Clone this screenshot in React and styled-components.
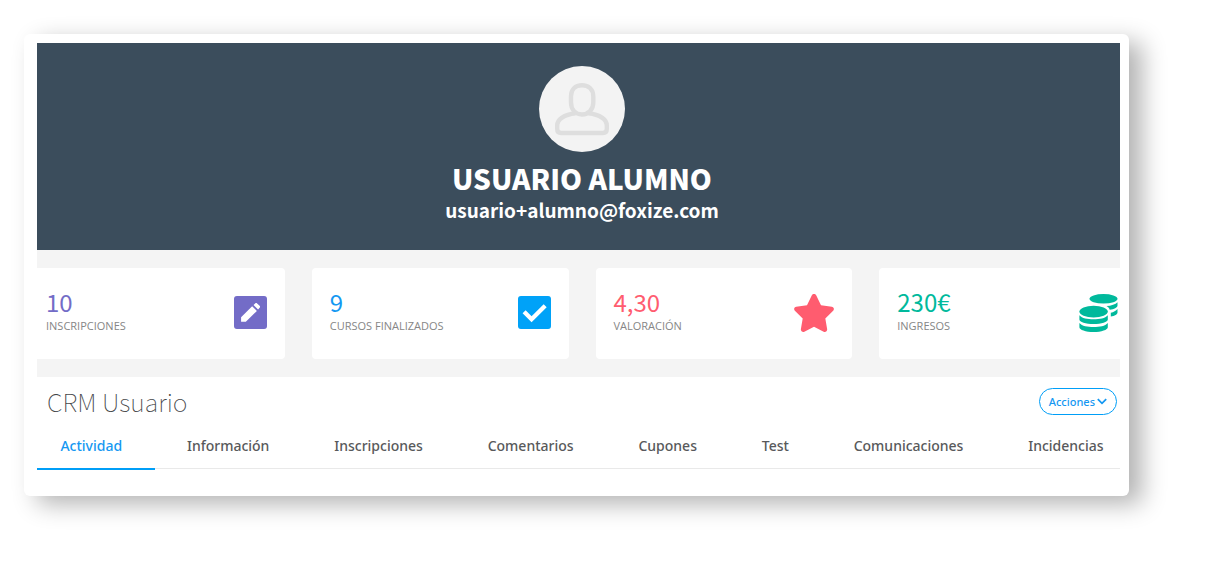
import React from 'react'
import styled, { createGlobalStyle } from 'styled-components'
import { FaStar } from 'react-icons/fa6'

const GlobalStyle = createGlobalStyle`
  * {
    box-sizing: border-box;
  }

  body {
    margin: 0;
    background: #fff;
    font-family: 'Noto Sans', 'Open Sans', sans-serif;
  }
`

const displayFont = "'Noto Sans CJK SC', 'Noto Sans', sans-serif"

const Page = styled.div`
  padding: 34px 84px 70px 24px;
`

const Sheet = styled.main`
  padding: 9px 9px 26px 13px;
  border-radius: 6px;
  background: #fff;
  box-shadow: 13px 8px 25px rgba(0, 0, 0, 0.3);
`

const Viewport = styled.div`
  overflow: hidden;
`

const Content = styled.div`
  margin: 0 -16px 0 -9px;
  padding-bottom: 1px;
`

const Header = styled.header`
  display: flex;
  flex-direction: column;
  align-items: center;
  padding: 23px 0 26px;
  background: #3b4d5c;
  color: #fff;
  font-family: ${displayFont};
`

const Avatar = styled.svg`
  width: 86px;
  height: 86px;
`

const Name = styled.h1`
  margin: 8px 0 0;
  font-size: 28px;
  font-weight: 900;
  line-height: 36px;
  text-transform: uppercase;
`

const Email = styled.div`
  font-size: 19px;
  font-weight: 700;
  line-height: 28px;
`

const Stats = styled.section`
  display: grid;
  grid-template-columns: repeat(4, 1fr);
  gap: 27px;
  padding: 18px 0;
  background: #f4f4f4;
`

const Stat = styled.div`
  display: flex;
  align-items: center;
  justify-content: space-between;
  height: 91px;
  padding: 0 18px 2px;
  border-radius: 4px;
  background: #fff;
  color: ${(props) => props.$color};
`

const StatText = styled.div`
  padding-bottom: 6px;
`

const Value = styled.div`
  font-family: ${displayFont};
  font-size: 24px;
  line-height: 32px;
`

const Label = styled.div`
  color: #868686;
  font-family: 'Open Sans', sans-serif;
  font-size: 11px;
  font-weight: 500;
  line-height: 16px;
  text-transform: uppercase;
`

const IconSlot = styled.div`
  display: flex;

  & > svg {
    display: block;
  }
`

const TitleBar = styled.div`
  display: flex;
  align-items: center;
  justify-content: space-between;
  height: 50px;
  padding: 0 19px 2px;
`

const Title = styled.h2`
  margin: 0;
  color: #454648;
  font-family: ${displayFont};
  font-size: 25px;
  font-weight: 100;
  line-height: 36px;
`

const Actions = styled.button`
  display: flex;
  align-items: center;
  gap: 2px;
  height: 27px;
  padding: 0 9px;
  border: 1px solid #009ef7;
  border-radius: 14px;
  background: #fff;
  color: #1598f2;
  font: 500 11px 'Noto Sans', sans-serif;
`

const Tabs = styled.nav`
  display: flex;
  height: 42px;
  border-bottom: 1px solid #e9e9e9;
`

const Tab = styled.a`
  flex: 1 1 auto;
  height: 43px;
  padding-top: 9px;
  border-bottom: 2px solid ${(props) => (props.$active ? '#009ef7' : 'transparent')};
  color: ${(props) => (props.$active ? '#1598f2' : '#58595b')};
  font-size: 14px;
  font-weight: 500;
  line-height: 20px;
  text-align: center;
  text-decoration: none;
`

const PencilIcon = () => (
  <svg width="33" height="33" viewBox="0 0 34 34">
    <rect width="34" height="34" rx="3" fill="#736cc7" />
    <path
      d="M7.3 26.5v-4.7L18.7 10.6l4.9 4.8L12.2 26.5zM20.1 9.3l1.7-1.7c.6-.6 1.4-.6 2 0l2.6 2.5c.6.6.6 1.4 0 2l-1.6 1.9z"
      fill="#fff"
    />
  </svg>
)

const CheckIcon = () => (
  <svg width="33" height="33" viewBox="0 0 34 34" fill="none">
    <rect width="34" height="34" rx="3" fill="#00a2f8" />
    <path d="M6.3 16.2 14 24 28 10" stroke="#fff" strokeWidth="4.4" />
  </svg>
)

const CoinsIcon = () => (
  <svg width="39" height="38" viewBox="0 0 39 38" fill="currentColor">
    <ellipse cx="24.5" cy="4.8" rx="14" ry="4.8" />
    <path d="M38.5 8.3v3.2c0 2.1-3.4 3.7-7.8 4.2-.5-1.6-1.6-2.8-3.2-3.6 4.8-.3 9.1-1.6 11-3.8z" />
    <path d="M38.5 15v3.6c0 1.9-2.7 3.4-6.7 4v-3.9c2.8-.6 5.2-1.7 6.7-3.7z" />
    <ellipse cx="14.6" cy="17.6" rx="14.2" ry="5.8" />
    <path d="M.4 21.2c2.7 3.1 8 4 14.2 4s11.5-.9 14.2-4v4.3c0 2.5-6.3 4.5-14.2 4.5S.4 28 .4 25.5z" />
    <path d="M.4 29c2.7 3.1 8 4 14.2 4s11.5-.9 14.2-4v4.2c0 2.6-6.3 4.8-14.2 4.8S.4 35.8.4 33.2z" />
  </svg>
)

const ChevronIcon = () => (
  <svg width="10" height="7" viewBox="0 0 10 7" fill="none" stroke="currentColor" strokeWidth="1.8">
    <path d="M.8 1.2 5 5.3l4.2-4.1" />
  </svg>
)

const StarIcon = styled(FaStar)`
  width: 40px;
  height: 38px;
`

const stats = [
  { value: '10', label: 'Inscripciones', color: '#736cc7', icon: <PencilIcon /> },
  { value: '9', label: 'Cursos finalizados', color: '#1598f2', icon: <CheckIcon /> },
  {
    value: '4,30',
    label: 'Valoración',
    color: '#ff5c6f',
    icon: <StarIcon viewBox="22 0 532 512" preserveAspectRatio="none" />,
  },
  { value: '230€', label: 'Ingresos', color: '#00b99c', icon: <CoinsIcon /> },
]

const tabs = [
  'Actividad',
  'Información',
  'Inscripciones',
  'Comentarios',
  'Cupones',
  'Test',
  'Comunicaciones',
  'Incidencias',
]

const App = () => {
  return (
    <Page>
      <GlobalStyle />
      <Sheet>
        <Viewport>
          <Content>
            <Header>
              <Avatar viewBox="0 0 86 86" fill="none">
                <circle cx="43" cy="43" r="43" fill="#f3f3f3" />
                <g stroke="#dedede" strokeWidth="4.4">
                  <path d="M43 19.2c-6.8 0-11 4.4-11 11v6.3c0 7 4.4 12 11 12s11.3-5 11.3-12v-6.3c0-6.6-4.5-11-11.3-11z" />
                  <path d="M36.5 47.3C25 48.6 18.2 53.5 18.2 59.5V63c0 2.6 1.3 4 4 4h41.6c2.7 0 4-1.4 4-4v-3.5c0-6-6.8-10.9-18.3-12.2" />
                </g>
              </Avatar>
              <Name>Usuario Alumno</Name>
              <Email>usuario+alumno@foxize.com</Email>
            </Header>
            <Stats>
              {stats.map(({ value, label, color, icon }) => (
                <Stat key={label} $color={color}>
                  <StatText>
                    <Value>{value}</Value>
                    <Label>{label}</Label>
                  </StatText>
                  <IconSlot>{icon}</IconSlot>
                </Stat>
              ))}
            </Stats>
            <TitleBar>
              <Title>CRM Usuario</Title>
              <Actions type="button">
                Acciones
                <ChevronIcon />
              </Actions>
            </TitleBar>
            <Tabs>
              {tabs.map((tab, index) => (
                <Tab key={tab} href="#" $active={index === 0}>
                  {tab}
                </Tab>
              ))}
            </Tabs>
          </Content>
        </Viewport>
      </Sheet>
    </Page>
  )
}

export default App
